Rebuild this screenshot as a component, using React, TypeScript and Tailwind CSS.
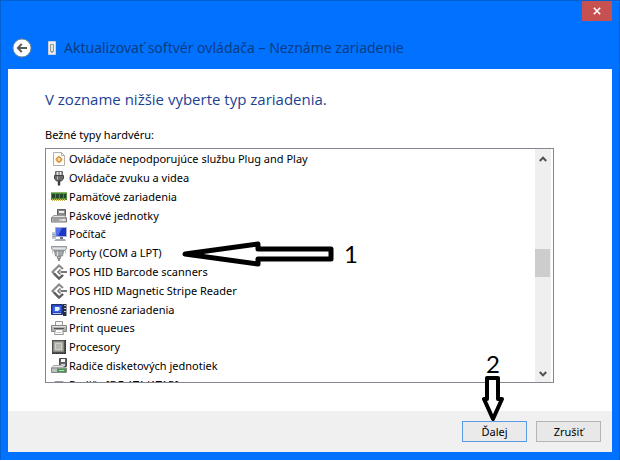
import type { ReactNode } from "react";

type DeviceType = {
  name: string;
  icon: ReactNode;
};

function LegacyIcon() {
  return (
    <svg viewBox="0 0 16 16" className="w-4 h-4">
      <path d="M2.500 1.500h8l3 3v10h-11z" fill="#fdfcf8" stroke="#b5b1a8" />
      <path d="M10.500 1.500v3h3" fill="none" stroke="#b5b1a8" />
      <circle cx="8" cy="8.500" r="2.200" fill="#f8e4b8" stroke="#dd9a3c" strokeWidth="1.600" />
      <path d="M8 5v1M8 11v1M4.500 8.500h1M10.500 8.500h1" stroke="#dd9a3c" strokeWidth="1.400" />
    </svg>
  );
}

function JackIcon() {
  return (
    <svg viewBox="0 0 16 16" className="w-4 h-4">
      <path d="M4.500 1.500h7v4h-7z" fill="#a5a5a5" stroke="#6b6b6b" />
      <path d="M6.500 2v3M9.500 2v3" stroke="#e6e6e6" />
      <path d="M3.500 5.500h9v3L10.500 11h-5l-2-2.500z" fill="#6a6a6a" stroke="#444" />
      <path d="M6.500 6.500v3" stroke="#c5c5c5" />
      <path d="M8 11v4.500" stroke="#3a3a3a" strokeWidth="2.400" />
    </svg>
  );
}

function MemoryIcon() {
  return (
    <svg viewBox="0 0 16 16" className="w-4 h-4">
      <path d="M0 3h16v8H0z" fill="#4c8a3d" />
      <path d="M1 5h3v4H1zM5 5h3v4H5zM9 5h3v4H9zM13 5h2v4h-2z" fill="#24472a" />
      <path d="M0 3.500h16" stroke="#8fb86c" />
      <path d="M1 11h14" stroke="#c9b84f" strokeWidth="2" strokeDasharray="1 1" />
    </svg>
  );
}

function TapeIcon() {
  return (
    <svg viewBox="0 0 16 16" className="w-4 h-4">
      <path d="M6.500 1.500h8v6h-8z" fill="#8a8a8a" stroke="#5f5f5f" />
      <path d="M8 3h5v2H8z" fill="#ececec" />
      <path d="M2.500 7.500h11l2 2.500H.500z" fill="#e4e4e4" stroke="#999" />
      <path d="M.500 10h15v4H.500z" fill="#c9c9c9" stroke="#777" />
      <path d="M2 12h6" stroke="#777" />
      <path d="M11 12h3" stroke="#fafafa" />
    </svg>
  );
}

function ComputerIcon() {
  return (
    <svg viewBox="0 0 16 16" className="w-4 h-4">
      <path d="M1 6h4v7H1z" fill="#c5c9d2" />
      <path d="M1.500 8.500h3M1.500 10.500h3" stroke="#8d93a0" />
      <path d="M4.500 1.500h11v9h-11z" fill="#1d34c4" stroke="#a7b0cf" />
      <path d="M5 2h6l-4 8H5z" fill="#5270ea" />
      <path d="M9 11h3v2H9z" fill="#6d7078" />
      <path d="M5 13h9l1 2H3z" fill="#a4a8b2" />
    </svg>
  );
}

function PortIcon() {
  return (
    <svg viewBox="0 0 16 16" className="w-4 h-4">
      <path d="M.500 1.500h15v2l-1.500 2H2L.500 3.500z" fill="#c9ccce" stroke="#94979a" />
      <path d="M2.500 3.500h11" stroke="#fff" strokeDasharray="1 1" />
      <path d="M3.500 6h9l-1 5h-7z" fill="#a5a8ab" stroke="#888b8e" />
      <path d="M6.500 6.500V11" stroke="#dcdee0" />
      <path d="M6.500 11.500h3v2h-3z" fill="#c5c8cb" stroke="#85888c" />
      <path d="M8 13.500V16" stroke="#85888c" strokeWidth="2" />
      <path d="M1.500 5.500v3M14.500 5.500v3" stroke="#bfc2c5" />
    </svg>
  );
}

function PosIcon() {
  return (
    <svg viewBox="0 0 16 16" className="w-4 h-4">
      <path d="M12 5L8 1.500 1.500 8 8 14.500 12 11" fill="none" stroke="#8b8b8b" strokeWidth="2.200" />
      <path d="M3 9.500l5 5 4-3.500" fill="none" stroke="#5f5f5f" strokeWidth="2.200" />
      <path d="M9.500 5.500L7 8l2.500 2.500" fill="none" stroke="#777" strokeWidth="1.600" />
      <path d="M9.500 8H16" stroke="#555" strokeWidth="1.600" />
    </svg>
  );
}

function PortableIcon() {
  return (
    <svg viewBox="0 0 16 16" className="w-4 h-4">
      <path d="M.500 2.500h11v10H.500z" fill="#2444c4" stroke="#20316b" />
      <path d="M2 4h8v6H2z" fill="#3c64e4" />
      <path d="M4 5h4l1 2-2 2H4z" fill="#e9effe" />
      <path d="M2 11.500h8" stroke="#c2cce8" />
      <path d="M12 2h3.500v12H12z" fill="#2c2e36" />
      <path d="M13 3.500h2M13 6.500h2M13 9.500h2" stroke="#bcc1ce" />
    </svg>
  );
}

function PrinterIcon() {
  return (
    <svg viewBox="0 0 16 16" className="w-4 h-4">
      <path d="M4.500 1.500h7V6h-7z" fill="#f8f8f8" stroke="#999" />
      <path d="M.500 5.500h15v6H.500z" fill="#b2b2b2" stroke="#858585" />
      <path d="M1 6.500h14" stroke="#e2e2e2" />
      <path d="M3 8.500h10" stroke="#555" />
      <path d="M4.500 9.500h7l1 5h-9z" fill="#fff" stroke="#999" />
      <path d="M5.500 12.500h5" stroke="#c5c5c5" />
    </svg>
  );
}

function CpuIcon() {
  return (
    <svg viewBox="0 0 16 16" className="w-4 h-4">
      <path d="M1 1h14v14H1z" fill="#4f4f4d" />
      <path d="M1 14.500h14M14.500 1v14" stroke="#2b2b2b" strokeDasharray="1 1" />
      <path d="M2.500 2.500h10v10h-10z" fill="#a9a9a2" stroke="#8a8a84" />
      <path d="M4.500 4.500h6v6h-6z" fill="#b5b5ae" stroke="#d0d0ca" />
    </svg>
  );
}

function FloppyControllerIcon() {
  return (
    <svg viewBox="0 0 16 16" className="w-4 h-4">
      <path d="M8.500.500h7v8h-7z" fill="#5d6367" stroke="#474b4f" />
      <path d="M10 1h4v3h-4z" fill="#f5f5f5" />
      <path d="M10 6h4v2h-4z" fill="#cfd3d6" />
      <path d="M2.500 7.500h9l3 2.500H.500z" fill="#e4e4e4" stroke="#aaa" />
      <path d="M.500 10h15v4.500H.500z" fill="#bfc3bf" stroke="#888" />
      <path d="M6 10.500h9v3.500H6z" fill="#4a9655" />
      <path d="M8 12.500h5" stroke="#b4dfb4" />
    </svg>
  );
}

function ControllerIcon() {
  return (
    <svg viewBox="0 0 16 16" className="w-4 h-4">
      <path d="M4 4.500h8l3 3H1z" fill="#ccc" stroke="#999" />
      <path d="M1 8h14v5H1z" fill="#aaa" />
    </svg>
  );
}

const deviceTypes: DeviceType[] = [
  { name: "Ovládače nepodporujúce službu Plug and Play", icon: <LegacyIcon /> },
  { name: "Ovládače zvuku a videa", icon: <JackIcon /> },
  { name: "Pamäťové zariadenia", icon: <MemoryIcon /> },
  { name: "Páskové jednotky", icon: <TapeIcon /> },
  { name: "Počítač", icon: <ComputerIcon /> },
  { name: "Porty (COM a LPT)", icon: <PortIcon /> },
  { name: "POS HID Barcode scanners", icon: <PosIcon /> },
  { name: "POS HID Magnetic Stripe Reader", icon: <PosIcon /> },
  { name: "Prenosné zariadenia", icon: <PortableIcon /> },
  { name: "Print queues", icon: <PrinterIcon /> },
  { name: "Procesory", icon: <CpuIcon /> },
  { name: "Radiče disketových jednotiek", icon: <FloppyControllerIcon /> },
  { name: "Radiče IDE ATA/ATAPI", icon: <ControllerIcon /> },
];

function ScrollBar() {
  return (
    <div className="w-4 mr-[2px] shrink-0 flex flex-col bg-[#efefef]">
      <button aria-label="Posunúť nahor" className="h-5 flex items-center justify-center">
        <svg viewBox="0 0 8 6" className="w-2 h-[6px]">
          <path d="M.800 5L4 1.600 7.200 5" fill="none" stroke="#4f4f4f" strokeWidth="2" />
        </svg>
      </button>
      <div className="grow-[8]" />
      <div className="w-[15px] h-7 bg-[#cdcdcd]" />
      <div className="grow-[9]" />
      <button aria-label="Posunúť nadol" className="h-4 flex items-center justify-center">
        <svg viewBox="0 0 8 6" className="w-2 h-[6px]">
          <path d="M.800 1L4 4.400 7.200 1" fill="none" stroke="#4f4f4f" strokeWidth="2" />
        </svg>
      </button>
    </div>
  );
}

export default function App() {
  return (
    <div className="w-full bg-[#0072ff] border-x border-t border-[#0560cf] px-[7px] pb-2 font-['Noto_Sans','Open_Sans',sans-serif] text-black">
      {/* Title bar */}
      <header>
        <div className="flex justify-end">
          <button
            aria-label="Zavrieť"
            className="w-[30px] h-5 bg-[#c75050] flex items-center justify-center"
          >
            <svg viewBox="0 0 8 8" className="w-2 h-2">
              <path d="M.800.800l6.400 6.400M7.200.800L.800 7.200" stroke="#fff" strokeWidth="1.600" />
            </svg>
          </button>
        </div>
        <div className="h-12 pl-1 pt-3 pb-[6px] flex items-center">
          <button aria-label="Späť" className="w-5 h-5">
            <svg viewBox="0 0 20 20" className="w-5 h-5">
              <circle cx="10" cy="10" r="9" fill="#fff" stroke="#7f8b99" />
              <path d="M15 10H6M9.800 6L5.800 10l4 4" fill="none" stroke="#5a5a5a" strokeWidth="1.800" />
            </svg>
          </button>
          <svg viewBox="0 0 8 14" className="w-2 h-[14px] ml-4">
            <path d="M.500.500h7v13h-7z" fill="#eeeeea" stroke="#c9cfd4" />
            <path d="M2.500 3.500h3v7h-3z" fill="#e4e6e6" stroke="#8f969c" />
            <path d="M3 11.500h2" stroke="#9ab89a" />
          </svg>
          <h1 className="ml-2 text-[14px] leading-5 text-[#0b3c82] whitespace-nowrap">
            Aktualizovať softvér ovládača – Neznáme zariadenie
          </h1>
        </div>
      </header>

      <main className="bg-white pl-[37px] pr-[58px] pt-5 pb-7">
        <h2 className="font-['Open_Sans',sans-serif] text-[15px] leading-5 text-[#1c3f94]">
          V zozname nižšie vyberte typ zariadenia.
        </h2>
        <p id="types-label" className="mt-4 mb-[3px] text-[11px] leading-5">
          Bežné typy hardvéru:
        </p>

        <div className="relative">
          <div className="h-[235px] flex border border-[#828790] overflow-hidden">
            <ul
              role="listbox"
              aria-labelledby="types-label"
              className="flex-1 h-[244px] mt-px pl-[5px] grid auto-rows-fr"
            >
              {deviceTypes.map((type) => (
                <li
                  key={type.name}
                  role="option"
                  aria-selected={false}
                  className="min-h-0 flex items-center gap-[2px] text-[11px] leading-4 whitespace-nowrap"
                >
                  {type.icon}
                  <span>{type.name}</span>
                </li>
              ))}
            </ul>
            <ScrollBar />
          </div>

          {/* Step 1 marker */}
          <div className="absolute left-[137px] top-[93px] flex items-center gap-2">
            <svg viewBox="0 0 154 26" className="w-[154px] h-[26px]">
              <path
                d="M3 13L76 3v5h73v10H76v5z"
                fill="#fff"
                stroke="#000"
                strokeWidth="5"
                strokeLinejoin="round"
              />
            </svg>
            <span className="font-[Lato,sans-serif] text-[24px] leading-6">1</span>
          </div>
        </div>
      </main>

      <footer className="bg-[#f0f0f0] h-[41px] pr-[11px] pt-[10px] flex items-start justify-end gap-[9px]">
        <div className="relative flex">
          <button className="w-[65px] h-[21px] border border-[#5b9be6] bg-[#eaeaea] text-[11px] leading-4">
            Ďalej
          </button>
          {/* Step 2 marker */}
          <div className="absolute left-5 bottom-5 flex flex-col items-center">
            <span className="font-[Lato,sans-serif] text-[24px] leading-6">2</span>
            <svg viewBox="0 0 22 46" className="w-[22px] h-[46px]">
              <path
                d="M5 2h11v21h4l-9 20L2 23h3z"
                fill="#fff"
                stroke="#000"
                strokeWidth="4"
                strokeLinejoin="round"
              />
            </svg>
          </div>
        </div>
        <button className="w-[65px] h-[21px] border border-[#b5b5b5] bg-[#e8e8e8] text-[11px] leading-4">
          Zrušiť
        </button>
      </footer>
    </div>
  );
}
